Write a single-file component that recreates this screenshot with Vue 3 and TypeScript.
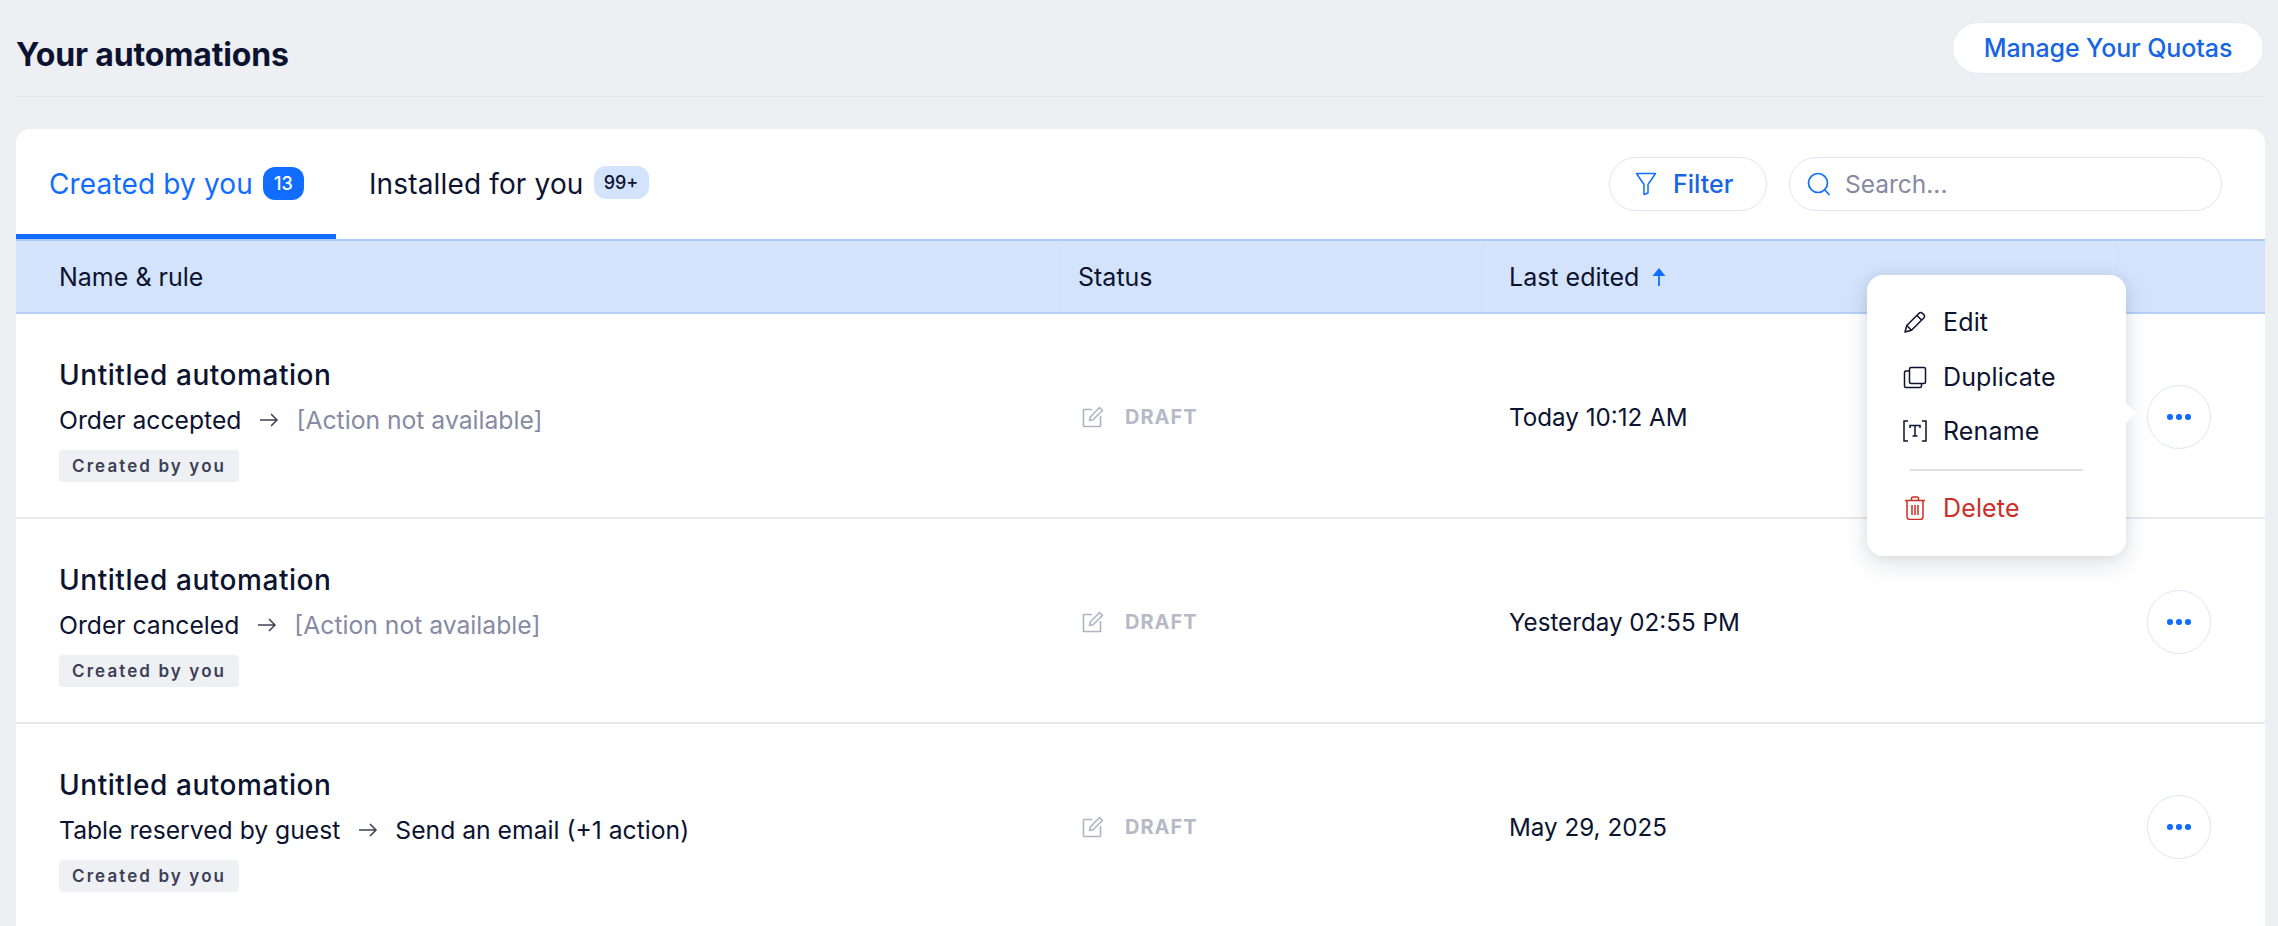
<script setup lang="ts">
interface Row {
  trigger: string
  action: string
  unavailable: boolean
  edited: string
  menu: boolean
}
const rows: Row[] = [
  { trigger: 'Order accepted', action: '[Action not available]', unavailable: true, edited: 'Today 10:12 AM', menu: true },
  { trigger: 'Order canceled', action: '[Action not available]', unavailable: true, edited: 'Yesterday 02:55 PM', menu: false },
  { trigger: 'Table reserved by guest', action: 'Send an email (+1 action)', unavailable: false, edited: 'May 29, 2025', menu: false },
]
</script>

<template>
  <div class="page">
    <header class="top">
      <h1 class="title">Your automations</h1>
      <button class="quota">Manage Your Quotas</button>
    </header>

    <section class="card">
      <div class="toolbar">
        <div class="tabs">
          <div class="tab active">
            <span>Created by you</span>
            <span class="count count-on">13</span>
          </div>
          <div class="tab">
            <span>Installed for you</span>
            <span class="count count-off">99+</span>
          </div>
        </div>
        <div class="tools">
          <button class="filter">
            <svg width="22" height="24" viewBox="0 0 22 24" fill="none" stroke="#116dff" stroke-width="1.5" stroke-linejoin="round">
              <path d="M1.5 1.5h19L13 12.5v8.5l-4 1.5v-10z" />
            </svg>
            <span>Filter</span>
          </button>
          <div class="search">
            <svg width="26" height="26" viewBox="0 0 26 26" fill="none" stroke="#116dff" stroke-width="1.7" stroke-linecap="round">
              <circle cx="12" cy="12" r="9.5" />
              <path d="M19 19l4 4.5" />
            </svg>
            <span>Search...</span>
          </div>
        </div>
      </div>

      <div class="grid head">
        <div class="cell c1">Name &amp; rule</div>
        <div class="cell c2">Status</div>
        <div class="cell c3">
          Last edited
          <svg class="sort" width="14" height="20" viewBox="0 0 14 20" fill="#116dff">
            <path d="M7 1l6.5 8h-5.600v10H6.100V9H.5z" />
          </svg>
        </div>
        <div class="cell c4"></div>
      </div>

      <div v-for="(row, i) in rows" :key="i" class="grid row">
        <div class="c1 name">
          <div class="name-title">Untitled automation</div>
          <div class="rule">
            <span>{{ row.trigger }}</span>
            <svg width="20" height="16" viewBox="0 0 20 16" fill="none" stroke="#3b4057" stroke-width="1.5">
              <path d="M1 8h17M12 2l6 6-6 6" />
            </svg>
            <span :class="{ muted: row.unavailable }">{{ row.action }}</span>
          </div>
          <span class="tag">Created by you</span>
        </div>
        <div class="c2 status">
          <svg width="22" height="22" viewBox="0 0 22 22" fill="none" stroke="#b0b3c1" stroke-width="1.6" stroke-linejoin="round">
            <path d="M10 3.500H1.500v17h17V10" />
            <path d="M7.500 14.500l.8-3.500L17.500 1.500l3 3L11 13.700z" />
          </svg>
          <span>DRAFT</span>
        </div>
        <div class="c3 edited">{{ row.edited }}</div>
        <div class="c4 actions">
          <div class="more-wrap">
            <button class="more" aria-label="More actions">
              <i></i><i></i><i></i>
            </button>
            <div v-if="row.menu" class="menu">
              <div class="item">
                <svg width="24" height="24" viewBox="0 0 24 24" fill="none" stroke="#0c1330" stroke-width="1.5" stroke-linejoin="round">
                  <path d="M2 22l1.800-6.500L16 3.200a2.400 2.400 0 0 1 3.400 0l1.400 1.400a2.400 2.400 0 0 1 0 3.400L8.500 20.200z" />
                  <path d="M14 5.500l4.500 4.500M3.800 15.500l4.700 4.700" />
                </svg>
                <span>Edit</span>
              </div>
              <div class="item">
                <svg width="24" height="24" viewBox="0 0 24 24" fill="none" stroke="#0c1330" stroke-width="1.5">
                  <rect x="6.500" y="2.500" width="16" height="16" rx="1.500" />
                  <path d="M6.500 6H3a1.500 1.500 0 0 0-1.500 1.500V21A1.500 1.500 0 0 0 3 22.500h14a1.500 1.500 0 0 0 1.500-1.500v-2.500" />
                </svg>
                <span>Duplicate</span>
              </div>
              <div class="item">
                <svg width="24" height="24" viewBox="0 0 24 24" fill="none" stroke="#0c1330" stroke-width="1.500">
                  <path d="M5 2H1v20h4M19 2h4v20h-4" />
                  <path d="M7 9V6.500h10V9M12 6.500V17M9.500 17h5" />
                </svg>
                <span>Rename</span>
              </div>
              <div class="divider"></div>
              <div class="item danger">
                <svg width="24" height="24" viewBox="0 0 24 24" fill="none" stroke="#cf2d27" stroke-width="1.500" stroke-linejoin="round">
                  <path d="M2 4.500h20M8.500 4.500V2.500a1.500 1.500 0 0 1 1.500-1.500h4a1.500 1.500 0 0 1 1.500 1.500v2" />
                  <path d="M4 4.500v16a3 3 0 0 0 3 3h10a3 3 0 0 0 3-3v-16" />
                  <path d="M9 9v10M12 9v10M15 9v10" />
                </svg>
                <span>Delete</span>
              </div>
              <span class="tip"></span>
            </div>
          </div>
        </div>
      </div>
    </section>
  </div>
</template>

<style>
body {
  background: #edeff3;
}
</style>

<style scoped>
.page {
  height: 926px;
  overflow: hidden;
  padding: 0 14px 0 16px;
  box-sizing: border-box;
  font-family: Inter, "Noto Sans", sans-serif;
  color: #0c1330;
  background: #edeff3;
}
.top {
  display: flex;
  justify-content: space-between;
  align-items: flex-start;
  height: 97px;
  box-sizing: border-box;
  padding-top: 22px;
  border-bottom: 1px solid #e1e3e9;
}
.title {
  margin: 14px 0 0;
  font-size: 32px;
  line-height: 38px;
  font-weight: 700;
  letter-spacing: -0.15px;
}
.quota {
  width: 312px;
  height: 52px;
  border-radius: 26px;
  border: 1px solid #e3e9f8;
  background: #fff;
  color: #1765e3;
  font: 500 25px Inter, sans-serif;
  letter-spacing: -0.1px;
}
.card {
  width: 2249px;
  margin-top: 32px;
  background: #fff;
  border-radius: 14px 14px 0 0;
}
.toolbar {
  display: flex;
  justify-content: space-between;
  height: 110px;
  box-sizing: border-box;
}
.tabs {
  display: flex;
}
.tab {
  display: flex;
  align-items: center;
  gap: 10px;
  height: 110px;
  box-sizing: border-box;
  padding: 0 32px 0 33px;
  font-size: 28px;
  letter-spacing: 0.15px;
}
.tab.active {
  color: #116dff;
  border-bottom: 5px solid #116dff;
  padding-top: 5px;
}
.tab:not(.active) {
  padding-bottom: 1px;
}
.count {
  display: flex;
  align-items: center;
  justify-content: center;
  height: 33px;
  border-radius: 12px;
  font-size: 18px;
  font-weight: 500;
  letter-spacing: 0;
  margin-top: -2px;
}
.count-on {
  width: 41px;
  background: #116dff;
  color: #fff;
}
.count-off {
  width: 55px;
  background: #d3e3fc;
  color: #0c1330;
}
.tools {
  display: flex;
  gap: 22px;
  padding: 28px 43px 0 0;
}
.filter {
  width: 158px;
  height: 54px;
  display: flex;
  align-items: center;
  gap: 16px;
  padding: 0 0 0 25px;
  border: 1px solid #dfe5f5;
  border-radius: 27px;
  background: #fff;
  color: #1765e3;
  font: 500 25px Inter, sans-serif;
}
.search {
  width: 433px;
  height: 54px;
  box-sizing: border-box;
  display: flex;
  align-items: center;
  gap: 13px;
  padding-left: 16px;
  border: 1px solid #dfe5f5;
  border-radius: 27px;
  color: #868aa5;
  font-size: 24.5px;
}
.grid {
  display: grid;
  grid-template-columns: 1040px 430px 627px 152px;
}
.head {
  height: 75px;
  box-sizing: border-box;
  background: #d3e3fc;
  border-top: 2px solid #afcbf7;
  border-bottom: 2px solid #b6d0f8;
  font-size: 25px;
}
.cell {
  display: flex;
  align-items: center;
  box-sizing: border-box;
}
.head .c2,
.head .c3,
.head .c4 {
  border-left: 1px solid #d9e6fc;
}
.head .c1 {
  padding-left: 43px;
}
.head .c2 {
  padding-left: 21px;
}
.head .c3 {
  padding-left: 22px;
}
.sort {
  margin-left: 13px;
}
.row {
  height: 205px;
  box-sizing: border-box;
  border-bottom: 2px solid #e7e9ee;
}
.name {
  padding: 43px 0 0 43px;
}
.name-title {
  font-size: 28px;
  line-height: 36px;
  font-weight: 500;
  letter-spacing: 0.55px;
}
.rule {
  display: flex;
  align-items: center;
  gap: 17.5px;
  margin-top: 11px;
  font-size: 24.7px;
  line-height: 32px;
}
.muted {
  color: #868aa5;
}
.tag {
  display: block;
  width: fit-content;
  margin-top: 14px;
  padding: 0 13px;
  height: 32px;
  line-height: 32px;
  border-radius: 4px;
  background: #eff0f4;
  color: #3b4057;
  font-size: 17px;
  font-weight: 600;
  letter-spacing: 2.1px;
}
.status {
  display: flex;
  align-items: center;
  gap: 21px;
  padding: 3px 0 0 26px;
  color: #b6b9c6;
  font-size: 20px;
  font-weight: 700;
  letter-spacing: 1px;
}
.edited {
  display: flex;
  align-items: center;
  padding: 3px 0 0 23px;
  font-size: 24.2px;
}
.actions {
  display: flex;
  align-items: center;
  justify-content: flex-end;
  padding: 3px 54px 0 0;
}
.more-wrap {
  position: relative;
  width: 64px;
  height: 64px;
}
.more {
  width: 64px;
  height: 64px;
  padding: 0;
  display: flex;
  align-items: center;
  justify-content: center;
  gap: 3.5px;
  border: 1px solid #dfe5f5;
  border-radius: 50%;
  background: #fff;
}
.more i {
  width: 5.500px;
  height: 5.500px;
  border-radius: 50%;
  background: #116dff;
}
.menu {
  position: absolute;
  right: 85px;
  top: -110px;
  width: 259px;
  height: 281px;
  box-sizing: border-box;
  padding: 20px 0 0 36px;
  background: #fff;
  border-radius: 16px;
  box-shadow: 0 8px 24px rgba(22, 45, 61, 0.14), 0 0 12px rgba(22, 45, 61, 0.06);
  z-index: 2;
}
.item {
  display: flex;
  align-items: center;
  gap: 16px;
  height: 54.500px;
  font-size: 25px;
  letter-spacing: 0.15px;
}
.item svg {
  flex: none;
}
.danger {
  color: #cf2d27;
}
.divider {
  width: 173px;
  height: 2px;
  margin: 10px 0 10px 7px;
  background: #dfe1e8;
}
.tip {
  position: absolute;
  right: -10px;
  top: 128px;
  width: 20px;
  height: 20px;
  background: #fff;
  transform: rotate(45deg) scale(0.72);
}
</style>
